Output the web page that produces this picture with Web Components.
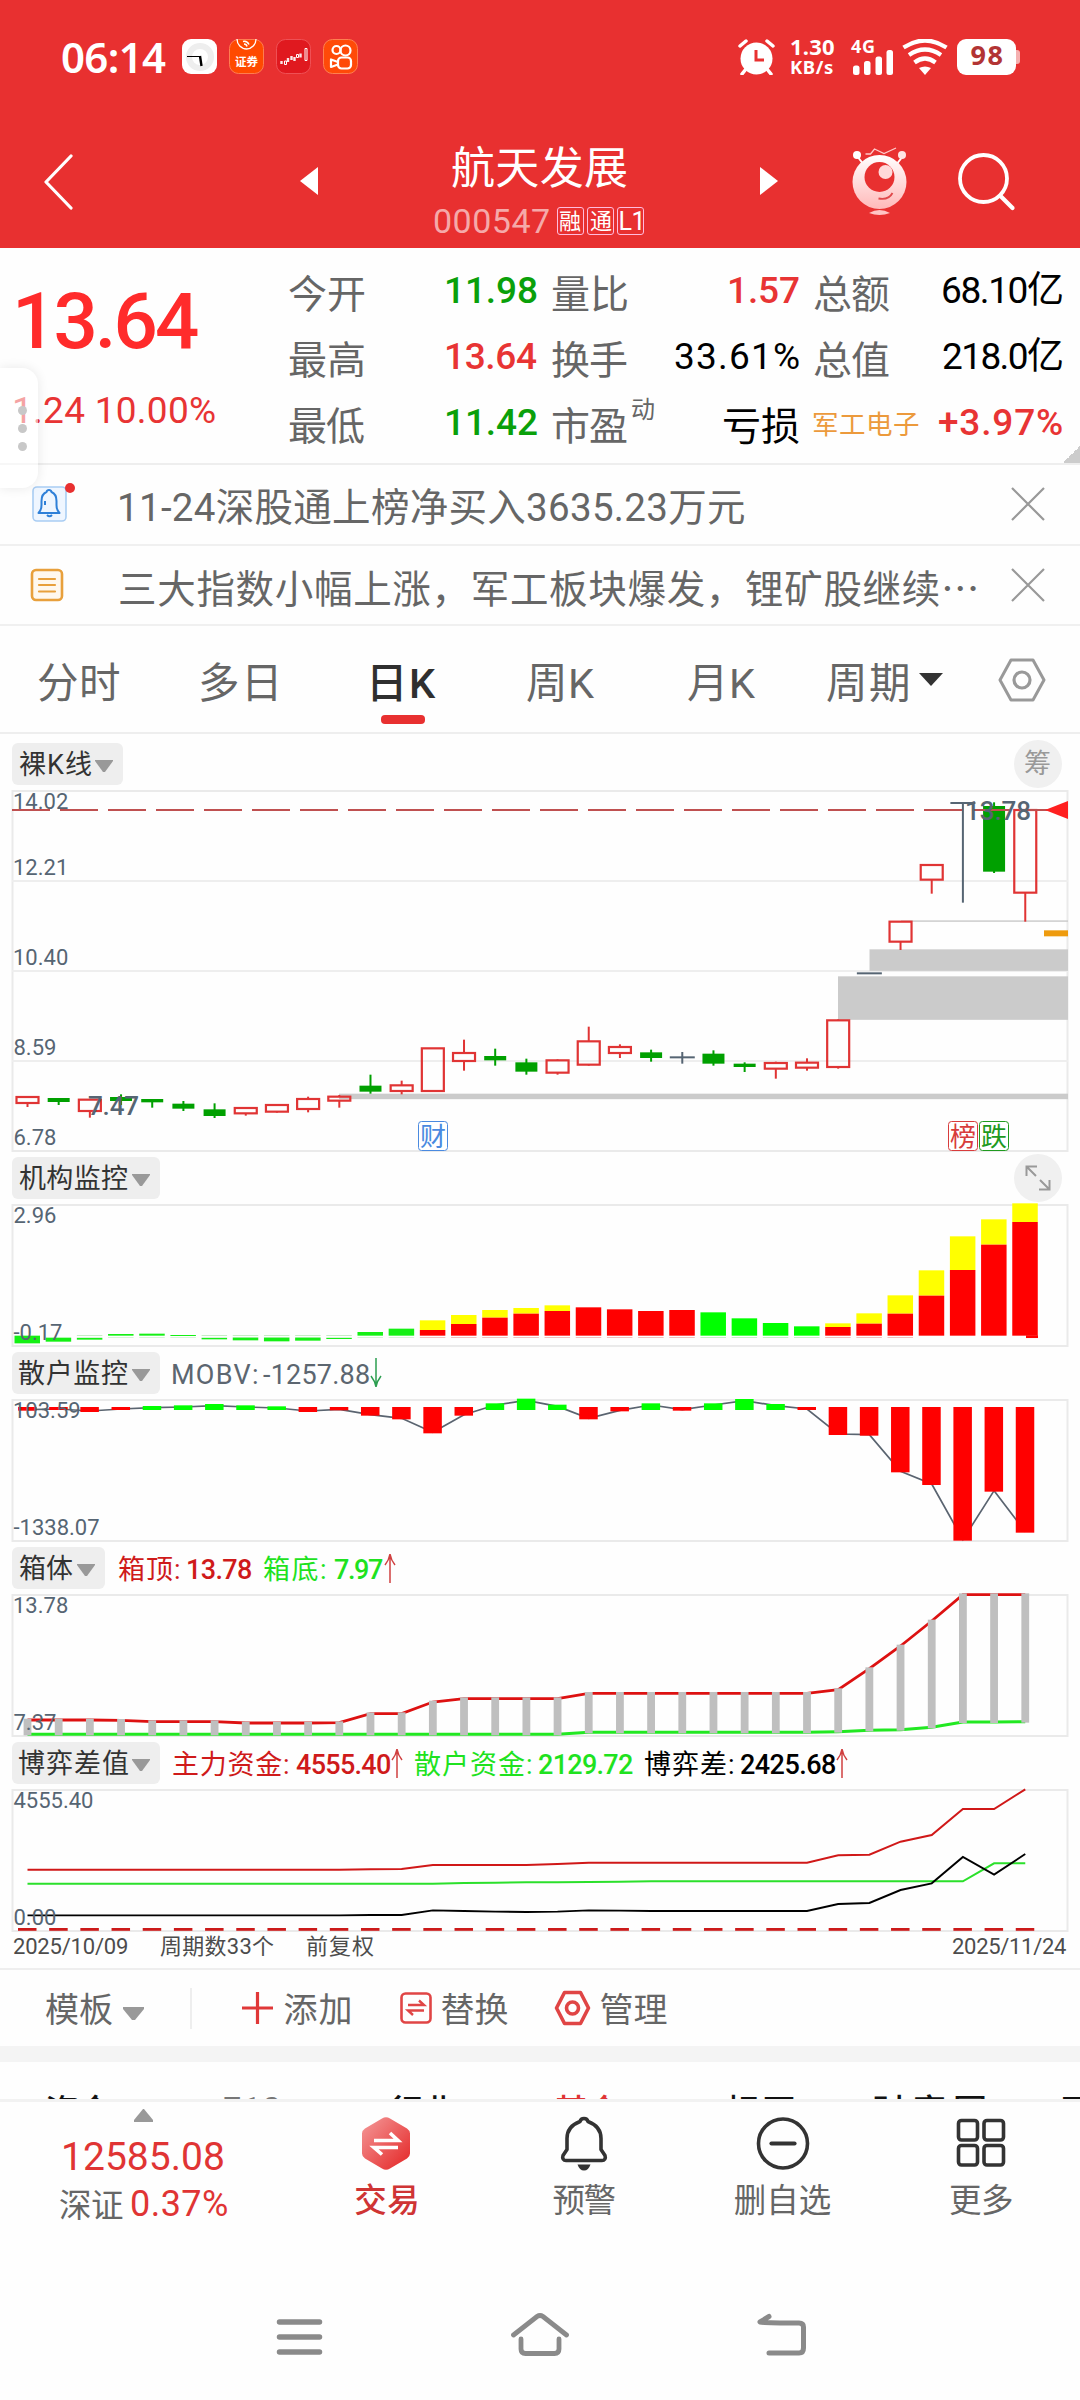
<!DOCTYPE html>
<html lang="zh-CN">
<head>
<meta charset="utf-8">
<title>航天发展 000547</title>
<style>
  html, body {
    margin: 0;
    padding: 0;
  }

  body {
    width: 1080px;
    height: 2400px;
    overflow: hidden;
    background: #fefefe;
    color: #666;
    font-family: Roboto, "Noto Sans CJK SC", sans-serif;
  }
</style>
</head>
<body>
<stock-page></stock-page>

<script>
const measureCtx = document.createElement('canvas').getContext('2d');

// Text that spreads its letters so the ink fills exactly `w` pixels
class FitText extends HTMLElement {
  constructor() {
    super();
    this.attachShadow({ mode: 'open' });
    this.shadowRoot.innerHTML = `
<style>
  :host { display: block; flex: none; white-space: nowrap; line-height: 1.2; }
  span { display: block; white-space: pre; }
</style>
<span><slot></slot></span>`;
  }

  connectedCallback() {
    const w = parseFloat(this.getAttribute('w'));
    const text = this.textContent;
    const cs = getComputedStyle(this);
    measureCtx.font = `${cs.fontWeight} ${cs.fontSize} ${cs.fontFamily}`;
    const m = measureCtx.measureText(text);
    const ink = m.actualBoundingBoxLeft + m.actualBoundingBoxRight;
    const span = this.shadowRoot.querySelector('span');
    this.style.width = w + 'px';
    span.style.marginLeft = m.actualBoundingBoxLeft + 'px';
    if (text.length > 1) {
      span.style.letterSpacing = (w - ink) / (text.length - 1) + 'px';
    }
  }
}
customElements.define('fit-text', FitText);

// Base for elements made of a static shadow template
class UiElement extends HTMLElement {
  constructor() {
    super();
    this.attachShadow({ mode: 'open' });
    const template = document.createElement('template');
    template.innerHTML = this.constructor.html;
    this.shadowRoot.appendChild(template.content.cloneNode(true));
  }
}

// System status bar
class StatusBar extends UiElement {
  static html = `
<style>
  :host { display: flex; align-items: flex-start; height: 113px; box-sizing: border-box; padding: 39px 60px 0 62px; color: #fff; }
  svg { display: block; flex: none; }
  .time { font: 600 42px/36px "Noto Sans", sans-serif; margin-right: 16px; }
  .apps { display: flex; gap: 12px; }
  .right { display: flex; margin-left: auto; height: 36px; }
  .speed { display: flex; flex-direction: column; gap: 5px; margin: -1px 0 0 16px; font-weight: 700; font-family: "Noto Sans", sans-serif; }
  .speed fit-text { line-height: 16px; }
  .signal { margin-left: 17px; width: 43px; display: flex; flex-direction: column; }
  .signal fit-text { font: 700 18px/14px "Noto Sans", sans-serif; height: 11px; }
  .wifi { margin-left: 8px; }
  .battery { display: flex; align-items: center; margin-left: 9px; }
  .level { width: 59px; height: 36px; border-radius: 9px; background: #fff; color: #b23434; display: flex; justify-content: center; font: 700 27px/37px "Noto Sans", sans-serif; }
  .nub { width: 4px; height: 14px; border-radius: 0 3px 3px 0; background: #f5b0b0; }
</style>
<fit-text class="time" w="104">06:14</fit-text>
<div class="apps">
  <svg width="35" height="35" viewBox="0 0 35 35"><rect width="35" height="35" rx="9" fill="#fff"/><circle cx="18" cy="18" r="11" fill="none" stroke="#eee" stroke-width="6"/><path d="M5 17.500H18" stroke="#000" stroke-width="1"/><path d="M18 17l1.500 10" stroke="#000" stroke-width="2.400"/></svg>
  <svg width="35" height="35" viewBox="0 0 35 35"><rect x=".5" y=".5" width="34" height="34" rx="9" fill="#ff4a00" stroke="#ff7d50"/><path d="M8 0a9.500 10 0 0 0 19 0" fill="none" stroke="#fff" stroke-width="1.300"/><path d="M14 2.500q4-1 6 3M15 5q2.500 0 3 2.500" fill="none" stroke="#fff" stroke-width="1.500"/><text x="6" y="27" font-size="11.500" font-weight="700" fill="#fff">证券</text></svg>
  <svg width="35" height="35" viewBox="0 0 35 35"><rect x=".5" y=".5" width="34" height="34" rx="9" fill="#e0191f" stroke="#ef5055"/><path d="M5.500 22v3M12 19v4M15.500 17v4M18.500 18v4M24.500 14.500v4" stroke="#fff" stroke-width="2.400" opacity=".9"/><path d="M8.500 22h2v3.500h-2zM20.500 15.500h2v3h-2zM29 9.500h2v12h-2z" fill="none" stroke="#fff" stroke-width="1"/></svg>
  <svg width="35" height="35" viewBox="0 0 35 35"><rect x=".5" y=".5" width="34" height="34" rx="9" fill="#ff4a08" stroke="#ff8050"/><g fill="none" stroke="#fff" stroke-width="2.200"><circle cx="13.500" cy="11" r="4"/><circle cx="22.500" cy="11.500" r="5"/><rect x="15" y="18.500" width="13" height="11" rx="3.500"/><path d="M15 23l-7-2.500v7.500l7-2.500" stroke-linejoin="round"/></g></svg>
</div>
<div class="right">
  <svg width="37" height="36" viewBox="0 0 37 36"><circle cx="18.500" cy="19.500" r="16" fill="#fff"/><path d="M2 7l6-5M35 7l-6-5" stroke="#fff" stroke-width="3.500" stroke-linecap="round"/><path d="M8 30l-4 5M29 30l4 5" stroke="#fff" stroke-width="3.500" stroke-linecap="round"/><path d="M18 11v10h8" fill="none" stroke="#e83030" stroke-width="3"/></svg>
  <div class="speed">
    <fit-text w="43" style="font-size:22px">1.30</fit-text>
    <fit-text w="42" style="font-size:18.500px">KB/s</fit-text>
  </div>
  <div class="signal">
    <fit-text w="23">4G</fit-text>
    <svg width="43" height="25" viewBox="0 0 43 25"><g fill="#fff"><rect x="2" y="15.500" width="6.500" height="9.500" rx="2.500"/><rect x="13" y="11" width="6.500" height="14" rx="2.500"/><rect x="24.500" y="6.500" width="6.500" height="18.500" rx="2.500"/><rect x="35.500" y="0" width="6.500" height="25" rx="2.500"/></g></svg>
  </div>
  <svg class="wifi" width="46" height="36" viewBox="0 0 46 36"><g fill="none" stroke="#fff" stroke-width="4.200"><path d="M1.500 8.500Q23-5.500 44.500 8.500"/><path d="M7 16Q23 5 39 16"/><path d="M12.500 23.500Q23 15.500 33.500 23.500"/></g><path d="M17 29q6-3 12 0l-6 7z" fill="#fff"/></svg>
  <div class="battery"><div class="level"><fit-text w="32">98</fit-text></div><div class="nub"></div></div>
</div>`;
}
customElements.define('status-bar', StatusBar);

// Title bar with the stock name
class TitleBar extends UiElement {
  static html = `
<style>
  :host { display: flex; height: 135px; color: #fff; }
  svg { display: block; flex: none; }
  .name { display: flex; flex-direction: column; align-items: center; width: 210px; margin: 0 116px 0 116px; }
  .title { font-size: 44px; line-height: 50px; margin: 31px 0 0 1px; }
  .code { display: flex; gap: 3px; margin-top: 13px; }
  .code > fit-text { font-size: 34px; line-height: 28px; color: #f5a9a9; margin-right: 5px; }
  .tag { width: 25px; height: 26px; border: 1px solid #fbd; border-radius: 3px; display: flex; justify-content: center; font-size: 22px; }
  .tag fit-text { line-height: 28px; }
</style>
<svg style="margin:41px 0 0 42px" width="32" height="56" viewBox="0 0 32 56"><path d="M29 2L4 28l25 26" fill="none" stroke="#fff" stroke-width="3.200" stroke-linecap="round" stroke-linejoin="round"/></svg>
<svg style="margin:53px 0 0 226px" width="18" height="30" viewBox="0 0 18 30"><path d="M18 1v28L0 15z" fill="#fff"/></svg>
<div class="name">
  <fit-text class="title" w="175">航天发展</fit-text>
  <div class="code">
    <fit-text w="115">000547</fit-text>
    <div class="tag"><fit-text w="21">融</fit-text></div>
    <div class="tag"><fit-text w="21">通</fit-text></div>
    <div class="tag"><fit-text w="20" style="font-size:25px;line-height:27px">L1</fit-text></div>
  </div>
</div>
<svg style="margin:53px 0 0 0" width="18" height="30" viewBox="0 0 18 30"><path d="M0 1v28l18-14z" fill="#fff"/></svg>
<svg style="margin:34px 0 0 74px" width="56" height="70" viewBox="0 0 56 70">
  <defs><linearGradient id="body" x1="0" y1="0" x2="0" y2="1"><stop offset="0" stop-color="#fff"/><stop offset="1" stop-color="#ffb9b9"/></linearGradient></defs>
  <path d="M5 9l7 9M51 9l-7 9" stroke="#fff" stroke-width="2"/>
  <circle cx="5" cy="8" r="4" fill="#fff"/><circle cx="50" cy="8" r="4" fill="#ffe4e4"/>
  <path d="M13.500 7h5l4-5 9.500 4.500L44 1" fill="none" stroke="#ffc9c9" stroke-width="1.300"/>
  <circle cx="27.500" cy="35" r="27" fill="url(#body)"/>
  <circle cx="27.500" cy="30" r="15" fill="#e83030"/>
  <circle cx="33.500" cy="25" r="7" fill="#ffd9d9"/>
  <path d="M26.500 51.500q10 2 14-5.500" fill="none" stroke="#e0484a" stroke-width="1.800"/>
  <path d="M17 66q10.500-6 21 0-10.500 4-21 0z" fill="#ffc4c4"/>
</svg>
<svg style="margin:39px 0 0 49px" width="60" height="60" viewBox="0 0 60 60"><circle cx="26.500" cy="26.500" r="23.500" fill="none" stroke="#fff" stroke-width="3.800"/><path d="M43.500 44l12 12" stroke="#fff" stroke-width="4.200" stroke-linecap="round"/></svg>`;
}
customElements.define('title-bar', TitleBar);

// Price summary: big price on the left, nine figures on the right
class QuoteSummary extends UiElement {
  static html = `
<style>
  :host { display: flex; position: relative; box-sizing: border-box; height: 217px; border-bottom: 2px solid #eee; }
  .price { width: 271px; padding-left: 18px; color: #ff2b2b; }
  .price .last { font-size: 78px; font-weight: 500; line-height: 90px; margin-top: 29px; }
  .price .diff { font-size: 37px; line-height: 44px; margin: 22px 0 0 -3px; color: #e83434; }
  .figures { display: grid; grid-template-columns: 248px 247px 248px; grid-template-rows: repeat(3, 66px); column-gap: 15px; padding-top: 10px; }
  .cell { display: flex; justify-content: space-between; align-items: center; font-size: 37px; color: #000; font-weight: 500; }
  .cell .label { font-size: 39px; color: #666; font-weight: 400; padding-top: 8px; }
  .cell .mark { font-size: 24px; color: #666; font-weight: 400; margin: 0 auto 26px 5px; }
  .cell .sector { font-size: 26.500px; color: #ec9a3c; font-weight: 400; padding-top: 4px; }
  .cell .plain { font-weight: 400; }
  .up { color: #e83434; }
  .down { color: #0aa00a; }
  .corner { position: absolute; right: 0; bottom: 0; width: 17px; height: 17px; background: linear-gradient(135deg, transparent 50%, #ccc 50%); }
</style>
<div class="price">
  <fit-text class="last" w="180">13.64</fit-text>
  <fit-text class="diff" w="200">1.24 10.00%</fit-text>
</div>
<div class="figures">
  <div class="cell"><fit-text class="label" w="75">今开</fit-text><fit-text class="down" w="90">11.98</fit-text></div>
  <div class="cell"><fit-text class="label" w="75">量比</fit-text><fit-text class="up" w="69">1.57</fit-text></div>
  <div class="cell"><fit-text class="label" w="75">总额</fit-text><fit-text class="plain" w="119">68.10亿</fit-text></div>
  <div class="cell"><fit-text class="label" w="75">最高</fit-text><fit-text class="up" w="90">13.64</fit-text></div>
  <div class="cell"><fit-text class="label" w="75">换手</fit-text><fit-text class="plain" w="124">33.61%</fit-text></div>
  <div class="cell"><fit-text class="label" w="75">总值</fit-text><fit-text class="plain" w="119">218.0亿</fit-text></div>
  <div class="cell"><fit-text class="label" w="75">最低</fit-text><fit-text class="down" w="90">11.42</fit-text></div>
  <div class="cell"><fit-text class="label" w="75">市盈</fit-text><fit-text class="mark" w="24">动</fit-text><fit-text class="plain" w="75" style="font-size:39px;padding-top:8px">亏损</fit-text></div>
  <div class="cell"><fit-text class="sector" w="105">军工电子</fit-text><fit-text class="up" w="123">+3.97%</fit-text></div>
</div>
<div class="corner"></div>`;
}
customElements.define('quote-summary', QuoteSummary);

// Side handle that floats over the page
class SideHandle extends UiElement {
  static html = `
<style>
  :host { position: absolute; left: 0; top: 368px; width: 38px; height: 120px; box-sizing: border-box; border-radius: 0 16px 16px 0; background: rgba(255,255,255,.55); box-shadow: 0 0 12px rgba(0,0,0,.09); display: flex; flex-direction: column; align-items: center; gap: 9px; padding: 38px 0 0 6px; }
  i { width: 9px; height: 9px; border-radius: 50%; background: #c8c8c8; }
</style>
<i></i><i></i><i></i>`;
}
customElements.define('side-handle', SideHandle);

// One line of news with an icon and a close cross
class NewsRow extends UiElement {
  static html = `
<style>
  :host { display: flex; align-items: center; box-sizing: border-box; height: 80.500px; padding: 0 34px 0 30px; border-bottom: 2px solid #f0f0f0; font-size: 38.500px; }
  .icon { width: 90px; flex: none; }
  .text { padding-top: 8px; }
  .close { margin-left: auto; display: block; }
</style>
<div class="icon"><slot name="icon"></slot></div>
<div class="text"><slot></slot></div>
<svg class="close" width="36" height="36" viewBox="0 0 36 36"><path d="M2 2l32 32M34 2L2 34" stroke="#999" stroke-width="2.200"/></svg>`;
}
customElements.define('news-row', NewsRow);

// Period tabs
class PeriodTabs extends UiElement {
  static html = `
<style>
  :host { display: flex; box-sizing: border-box; height: 108px; padding: 0 34px 0 38px; border-bottom: 2px solid #eee; font-size: 41.500px; }
  .tab { display: flex; flex-direction: column; align-items: center; }
  .tab fit-text { line-height: 56px; margin-top: 30px; }
  .tab.on { color: #2f2f2f; font-weight: 500; }
  .tab.on::after { content: ""; width: 44px; height: 9px; border-radius: 4px; background: #e83030; margin: 3px 2px 0 0; }
  svg { display: block; }
</style>
<div class="tab"><fit-text w="81">分时</fit-text></div>
<div class="tab" style="margin-left:82px"><fit-text w="75">多日</fit-text></div>
<div class="tab on" style="margin-left:96px"><fit-text w="64">日K</fit-text></div>
<div class="tab" style="margin-left:91px"><fit-text w="68">周K</fit-text></div>
<div class="tab" style="margin-left:93px"><fit-text w="68">月K</fit-text></div>
<div class="tab" style="margin-left:71px"><fit-text w="81">周期</fit-text></div>
<svg style="margin:47px 0 0 11px" width="24" height="14" viewBox="0 0 24 14"><path d="M0 0h24L12 13z" fill="#333"/></svg>
<svg style="margin:31px 0 0 auto" width="48" height="46" viewBox="0 0 48 46"><path d="M13 3h22l11 20-11 20H13L2 23z" fill="none" stroke="#999" stroke-width="3" stroke-linejoin="round"/><circle cx="24" cy="23" r="8" fill="none" stroke="#999" stroke-width="3.200"/></svg>`;
}
customElements.define('period-tabs', PeriodTabs);

// Chart block: selector chip, legend slot, round tool slot, then the plot
class ChartPanel extends UiElement {
  static html = `
<style>
  :host { display: block; padding: 0 12px; }
  header { display: flex; align-items: center; height: 42px; padding: 6px 0; font-size: 27px; }
  .chip { display: flex; align-items: center; height: 42px; padding: 0 10px 0 7px; border-radius: 6px; background: #eee; color: #333; }
  .chip svg { flex: none; margin: 3px 0 0 4px; }
  .chip .name { padding-top: 3px; }
  .legend { display: flex; align-items: center; margin-left: 13px; padding-top: 4px; font-size: 27px; }
  .tool { margin-left: auto; padding-right: 6px; height: 48px; }
</style>
<header>
  <div class="chip"><span class="name"><slot name="name"></slot></span><svg width="18" height="12" viewBox="0 0 18 12"><path d="M0 0h18v1L10 12H8L0 1z" fill="#999"/></svg></div>
  <div class="legend"><slot name="legend"></slot></div>
  <div class="tool"><slot name="tool"></slot></div>
</header>
<slot></slot>`;
}
customElements.define('chart-panel', ChartPanel);

class RoundTool extends UiElement {
  static html = `
<style>
  :host { display: flex; align-items: center; justify-content: center; width: 48px; height: 48px; border-radius: 50%; background: #f0f0f0; color: #999; font-size: 27px; }
</style>
<slot></slot>`;
}
customElements.define('round-tool', RoundTool);

// Up or down arrow after a legend value
class TrendArrow extends HTMLElement {
  constructor() {
    super();
    this.attachShadow({ mode: 'open' });
    const down = this.hasAttribute('down');
    this.shadowRoot.innerHTML = `
<style>
  :host { display: block; height: 30px; margin: -4px 0 0 1px; }
  svg { display: block; ${down ? 'transform: scaleY(-1);' : ''} }
</style>
<svg width="12" height="30" viewBox="0 0 12 30"><path d="M6 30V2M1 12q4-5 5-11 1 6 5 11" fill="none" stroke="${down ? '#2c9e50' : '#d04040'}" stroke-width="1.500"/></svg>`;
  }
}
customElements.define('trend-arrow', TrendArrow);

const STEP = 31.18;
const cx = i => 27.5 + i * STEP;
const rect = (x, y, w, h, fill) => `<rect x="${x}" y="${y}" width="${w}" height="${h}" fill="${fill}"/>`;
const line = (points, color, width) =>
  `<polyline points="${points.map((y, i) => cx(i) + ',' + y).join(' ')}" fill="none" stroke="${color}" stroke-width="${width}"/>`;
const fill = (n, v) => Array(n).fill(v);

// Base plot. Values are kept in thirds of a pixel from `origin`.
class BasePlot extends HTMLElement {
  constructor() {
    super();
    this.attachShadow({ mode: 'open' });
  }

  connectedCallback() {
    const { top, height } = this;
    this.shadowRoot.innerHTML = `
<style>
  :host { display: block; }
  svg { display: block; overflow: visible; }
  text { font-family: Roboto, "Noto Sans CJK SC", sans-serif; font-size: 22px; fill: #566573; }
</style>
<svg width="1056" height="${height}" viewBox="12 ${top} 1056 ${height}">
<rect x="12.500" y="${top}" width="1055" height="${height}" fill="none" stroke="#eaeaea" stroke-width="2"/>
${this.draw(v => this.origin + v / 3)}
${this.labels.map(([text, y]) => `<text x="${text[0] === '1' ? 13 : 13.5}" y="${y}">${text}</text>`).join('')}
</svg>`;
  }
}

const CANDLES = [
  ['r', 1101, 1119, 1101, 1131], ['g', 1104, 1116, 1104, 1125], ['r', 1109, 1143, 1109, 1163],
  ['g', 1101, 1113, 1093, 1125], ['g', 1107, 1117, 1107, 1133], ['g', 1121, 1136, 1113, 1143],
  ['g', 1138, 1158, 1120, 1164], ['r', 1134, 1150, 1131, 1157], ['r', 1125, 1145, 1122, 1148],
  ['r', 1107, 1137, 1100, 1147], ['r', 1100, 1112, 1095, 1133], ['g', 1067, 1085, 1034, 1091],
  ['r', 1066, 1083, 1052, 1093], ['r', 955, 1083, 955, 1086], ['r', 969, 993, 929, 1022],
  ['g', 978, 991, 956, 1007], ['g', 997, 1025, 986, 1034], ['r', 991, 1028, 988, 1034],
  ['r', 934, 1004, 890, 1007], ['r', 951, 969, 943, 984], ['g', 967, 984, 959, 995],
  ['n', 982, 982, 966, 1001], ['g', 971, 1001, 961, 1007], ['g', 1001, 1011, 997, 1026],
  ['r', 999, 1016, 995, 1046], ['r', 998, 1013, 985, 1022], ['r', 871, 1011, 868, 1016],
  ['n', 730, 730, 730, 730], ['r', 575, 635, 575, 660], ['r', 405, 449, 405, 491],
  ['n', 219, 219, 219, 518], ['g', 228, 425, 217, 429], ['r', 240, 488, 240, 575]
];

class CandlePlot extends BasePlot {
  top = 791;
  height = 360;
  origin = 730;
  labels = [['14.02', 809], ['12.21', 875], ['10.40', 965], ['8.59', 1055], ['6.78', 1145]];

  badge(x, text, color) {
    return `<rect x="${x + 0.5}" y="1121.500" width="29" height="29" rx="3" fill="#fff" stroke="${color}"/>
<text x="${x + 2}" y="1145.500" style="font-size:26px;fill:${color}">${text}</text>`;
  }

  draw(y) {
    let out = [881, 971, 1061].map(g => rect(12, g - 1, 1056, 2, '#eee')).join('');
    // price gaps
    out += rect(339, y(1091), 729, 5.5, '#cbcbcb');
    out += rect(838, y(739), 230, 43.5, '#cbcbcb');
    out += rect(869.500, y(658), 198.500, 21.5, '#cbcbcb');
    out += rect(901, y(571), 167, 1.5, '#ccc');
    out += rect(1044, y(601), 24, 6, '#ee9b0e');
    CANDLES.forEach(([kind, top, bottom, high, low], i) => {
      const x = cx(i);
      const color = { r: '#e03434', g: '#00a000', n: '#566573' }[kind];
      if (kind === 'g') {
        out += rect(x - 1, y(high), 2, (low - high) / 3, color) + rect(x - 11, y(top), 22, (bottom - top) / 3, color);
      } else if (kind === 'n') {
        out += rect(x - 1, y(high), 2, (low - high) / 3, color) + rect(x - 12.500, y(top) - 1, 25, 2, color);
      } else {
        out += rect(x - 1, y(high), 2, (top - high) / 3, color) + rect(x - 1, y(bottom), 2, (low - bottom) / 3, color);
        out += `<rect x="${x - 11}" y="${y(top)}" width="22" height="${(bottom - top) / 3}" fill="none" stroke="${color}" stroke-width="2.200"/>`;
      }
    });
    out += `<path d="M12 810H1050" stroke="#bf5050" stroke-width="2" stroke-dasharray="38 10"/>`;
    out += `<path d="M1068 801v18l-23-9z" fill="#ff2020"/>`;
    out += `<text x="88" y="1115" style="font-size:26px;font-weight:500" textLength="51">7.47</text>`;
    out += `<text x="965" y="820" style="font-size:26px;font-weight:500" textLength="66">13.78</text>`;
    out += this.badge(418, '财', '#4a8ae0') + this.badge(948, '榜', '#d83c3c') + this.badge(979, '跌', '#1f9a1f');
    return out;
  }
}
customElements.define('candle-plot', CandlePlot);

class InstitutionPlot extends BasePlot {
  top = 1205;
  height = 141;
  origin = 1150;
  labels = [['2.96', 1223], ['-0.17', 1340]];

  draw(y) {
    const G = '#00ff00';
    const low = [[557, 580], [563, 575], [564, 569], [552, 557], [551, 557], [555, 558], [564, 568], [563, 571], [563, 574], [563, 572], [564, 567], [546, 557], [536, 557]];
    // [yellow top, bar top, colour]
    const high = [[511, 540], [495, 522], [480, 503], [474, 491], [466, 483], [0, 472], [0, 478], [0, 483], [0, 480],
      [0, 487, G], [0, 505, G], [0, 519, G], [0, 529, G],
      [520, 531], [490, 521], [436, 491], [361, 437], [259, 360], [208, 284], [160, 216]];
    let out = '';
    low.forEach(([a, b], i) => {
      if (i > 1) out += rect(cx(i) - 13, y(561), 25.5, 0.6, '#bfeabf');
      if (a > 560 && i > 1) out += rect(cx(i) - 13, y(555), 25.5, 0.6, '#9fe09f');
      out += rect(cx(i) - 13, y(a), 25.5, (b - a) / 3, '#14f014');
    });
    high.forEach(([yellow, top, color = '#ff0000'], n) => {
      const x = cx(n + 13) - 13;
      if (yellow) out += rect(x, y(yellow), 25.5, (top - yellow) / 3, '#ffff00');
      out += rect(x, y(top), 25.5, (557 - top) / 3, color);
      if (n < 16) out += rect(x, y(561), 25.5, 0.8, color === G ? '#b5f0b5' : '#f0b0b0');
    });
    out += rect(1026, y(556), 12, 2.7, '#ff0000');
    return out;
  }
}
customElements.define('institution-plot', InstitutionPlot);

class RetailPlot extends BasePlot {
  top = 1400;
  height = 141;
  origin = 1150;
  labels = [['103.59', 1418], ['-1338.07', 1535]];

  draw(y) {
    const ends = [782, 780, 786, 780, 768, 766, 762, 766, 769, 786, 781, 797, 808, 850, 797, 760, 746, 764, 808, 784, 760,
      782, 760, 747, 762, 780, 855, 857, 967, 1005, 1172, 1025, 1148];
    let out = line(ends.map(v => y(v > 775 ? v - 3 : v + 5)), '#5a6470', 1.7);
    ends.forEach((v, i) => {
      const x = cx(i) - 9.5;
      out += v > 775 ? rect(x, y(771), 18.5, (v - 771) / 3, '#ff0000') : rect(x, y(v), 18.5, (780 - v) / 3, '#00ff00');
    });
    return out;
  }
}
customElements.define('retail-plot', RetailPlot);

class BoxPlot extends BasePlot {
  top = 1595;
  height = 141;
  origin = 1540;
  labels = [['13.78', 1613], ['7.37', 1730]];

  draw(y) {
    const upper = [540, 540, 540, 541, 545, 545, 545, 549, 549, 549, 548, 521, 521, 486, 476, 476, 476, 476,
      ...fill(8, 460), 449, 386, 318, 243, 164, 164, 164];
    const lower = [...fill(18, 583), ...fill(8, 577), 575, 571, 569, 562, 546, 546, 545];
    let out = line(upper.map(y), '#dd1111', 2.8) + line(lower.map(y), '#22e822', 3);
    upper.forEach((v, i) => {
      out += rect(cx(i) - 3.9, y(v - 4), 7.8, (lower[i] - v + 7) / 3, '#bfbfbf');
    });
    return out;
  }
}
customElements.define('box-plot', BoxPlot);

class GamePlot extends BasePlot {
  top = 1790;
  height = 141;
  origin = 1540;
  labels = [['4555.40', 1808], ['0.00', 1925]];

  draw(y) {
    const main = [...fill(11, 989), 988, 987, 975, 975, 975, 975, 972, ...fill(8, 968), 946, 944, 905, 885, 807, 807, 748];
    const retail = [...fill(14, 1031), 1029, 1028, 1027, 1027, 1026, 1025, ...fill(11, 1024), 970, 970];
    const diff = [...fill(11, 1126), 1125, 1125, 1111, 1113, 1115, 1116, 1115, 1111, 1112, ...fill(6, 1113), 1092, 1089, 1050, 1030, 951, 1004, 942];
    let out = line(retail.map(y), '#2be02b', 2) + line(main.map(y), '#d01818', 2) + line(diff.map(y), '#000', 1.9);
    diff.forEach((v, i) => {
      out += rect(cx(i) - 9.5, y(1164), 18.5, 2.8, '#cc1a1a');
    });
    return out;
  }
}
customElements.define('game-plot', GamePlot);

// Dates under the last plot
class DateRow extends UiElement {
  static html = `
<style>
  :host { display: flex; align-items: center; box-sizing: border-box; height: 39px; padding: 0 14px 0 14px; border-bottom: 2px solid #eee; font-size: 22px; color: #4c4c4c; }
  fit-text { padding-bottom: 4px; }
</style>
<fit-text w="113">2025/10/09</fit-text>
<fit-text w="114" style="margin-left:33px">周期数33个</fit-text>
<fit-text w="67" style="margin-left:33px">前复权</fit-text>
<fit-text w="113" style="margin-left:auto">2025/11/24</fit-text>`;
}
customElements.define('date-row', DateRow);

// Template / add / replace / manage
class ToolRow extends UiElement {
  static html = `
<style>
  :host { display: flex; align-items: center; box-sizing: border-box; height: 76px; padding-left: 46px; font-size: 34px; }
  fit-text { padding-top: 5px; }
  .rule { width: 1.500px; height: 41px; background: #eee; margin-left: 46px; }
  svg { display: block; }
</style>
<fit-text w="66">模板</fit-text>
<svg style="margin:10px 0 0 11px" width="21" height="13" viewBox="0 0 21 13"><path d="M0 0h21v2L12 13H9L0 2z" fill="#999"/></svg>
<div class="rule"></div>
<svg style="margin-left:50px" width="31" height="32" viewBox="0 0 31 32"><path d="M0 16h31M15.500 0v32" stroke="#e03838" stroke-width="3.200"/></svg>
<fit-text w="66" style="margin-left:12px">添加</fit-text>
<svg style="margin-left:49px" width="32" height="32" viewBox="0 0 32 32"><rect x="1.500" y="1.500" width="29" height="29" rx="4" fill="none" stroke="#e04545" stroke-width="2.600"/><path d="M8 13h16l-5-4.500M24 18.500H8l5 4.500" fill="none" stroke="#e04545" stroke-width="2.400"/></svg>
<fit-text w="66" style="margin-left:10px">替换</fit-text>
<svg style="margin-left:46px" width="37" height="36" viewBox="0 0 37 36"><path d="M10.500 2.500h16l8 15.500-8 15.500h-16L2.500 18z" fill="none" stroke="#e04545" stroke-width="3.600" stroke-linejoin="round"/><circle cx="18.500" cy="18" r="6" fill="none" stroke="#e04545" stroke-width="3.600"/></svg>
<fit-text w="66" style="margin-left:10px">管理</fit-text>`;
}
customElements.define('tool-row', ToolRow);

// Section tabs, scrolled mostly under the bottom bar
class SectionTabs extends UiElement {
  static html = `
<style>
  :host { display: flex; box-sizing: border-box; height: 53px; border-top: 16px solid #f4f4f4; padding: 28px 0 0 46px; overflow: hidden; color: #111; font-size: 34px; font-weight: 500; }
  fit-text { line-height: 44px; }
</style>
<fit-text w="66">资金</fit-text>
<fit-text w="56" style="margin:-3px 0 0 112px;color:#777">F10</fit-text>
<fit-text w="66" style="margin-left:109px">行业</fit-text>
<fit-text w="66" style="margin-left:100px;color:#e03434">基金</fit-text>
<fit-text w="69" style="margin-left:104px">相同</fit-text>
<fit-text w="112" style="margin-left:79px">财富圈</fit-text>
<fit-text w="66" style="margin-left:78px">两融</fit-text>`;
}
customElements.define('section-tabs', SectionTabs);

// Bottom actions
class ActionBar extends UiElement {
  static html = `
<style>
  :host { display: flex; box-sizing: border-box; height: 179px; border-top: 3px solid #f2f2f2; font-size: 32.500px; }
  .index { width: 287px; display: flex; flex-direction: column; align-items: center; color: #e03434; }
  .index .value { font-size: 39px; line-height: 46px; margin-top: 12px; }
  .index .row { display: flex; align-items: center; gap: 9px; margin-top: 3px; }
  .action { width: 198.250px; display: flex; flex-direction: column; align-items: center; padding-top: 14px; }
  .action fit-text { line-height: 44px; margin-top: 8px; }
  svg { display: block; }
</style>
<div class="index">
  <svg style="margin-top:7px" width="19" height="13" viewBox="0 0 19 13"><path d="M9 0h1l9 11v2H0v-2z" fill="#999"/></svg>
  <fit-text class="value" w="159">12585.08</fit-text>
  <div class="row"><fit-text w="63" style="color:#666;padding-top:3px">深证</fit-text><fit-text w="95" style="font-size:36px">0.37%</fit-text></div>
</div>
<div class="action" style="color:#cf3434;font-weight:500">
  <svg width="50" height="55" viewBox="0 0 50 55"><defs><linearGradient id="hex" x1="0" y1="0" x2="1" y2="1"><stop offset="0" stop-color="#f49a9a"/><stop offset="1" stop-color="#e42424"/></linearGradient></defs><path d="M21 2.500q4-2.500 8 0l17 10q3 2 3 5v20q0 3-3 5l-17 10q-4 2.500-8 0l-17-10q-3-2-3-5v-20q0-3 3-5z" fill="url(#hex)"/><path d="M13 24.500h24l-8-7.500M37 31.500H13l8 7" fill="none" stroke="#fff" stroke-width="3.600"/></svg>
  <fit-text w="62">交易</fit-text>
</div>
<div class="action">
  <svg width="48" height="55" viewBox="0 0 48 55"><path d="M24 2.500c2 0 3.500 1 4 3 8 3 13 9 13 17v11l4 6c1 3-.500 5-3 5H6c-2.500 0-4-2-3-5l4-6v-11c0-8 5-14 13-17 .500-2 2-3 4-3z" fill="none" stroke="#333" stroke-width="3.600" stroke-linejoin="round"/><path d="M17.500 48.500h13q-2 6-6.500 6t-6.500-6z" fill="#333"/></svg>
  <fit-text w="62">预警</fit-text>
</div>
<div class="action">
  <svg width="54" height="55" viewBox="0 0 54 55"><circle cx="27" cy="27.500" r="24.500" fill="none" stroke="#333" stroke-width="3.600"/><path d="M15.500 27.500h23" stroke="#333" stroke-width="4.200" stroke-linecap="round"/></svg>
  <fit-text w="96">删自选</fit-text>
</div>
<div class="action">
  <svg width="50" height="55" viewBox="0 0 50 55"><g fill="none" stroke="#333" stroke-width="3.600"><rect x="2.500" y="4.500" width="19" height="19.500" rx="3"/><rect x="28" y="4.500" width="19.500" height="19.500" rx="3"/><rect x="2.500" y="29.500" width="19" height="19.500" rx="3"/><rect x="28" y="29.500" width="19.500" height="19.500" rx="3"/></g></svg>
  <fit-text w="62">更多</fit-text>
</div>`;
}
customElements.define('action-bar', ActionBar);

// System navigation keys
class SystemNav extends UiElement {
  static html = `
<style>
  :host { display: flex; justify-content: center; align-items: flex-start; height: 87px; padding: 35px 0 0 2px; gap: 187px; }
  svg { display: block; fill: none; stroke: #8a8a8a; stroke-linecap: round; }
</style>
<svg width="47" height="45" viewBox="0 0 47 45"><path d="M3.500 9h40M3.500 24h40M3.500 39h40" stroke-width="5.500"/></svg>
<svg width="60" height="45" viewBox="0 0 60 45"><path d="M3.500 22L27 3.500q3-2 6 0L56.500 22M11 26v10q0 4.500 4.500 4.500h29q4.500 0 4.500-4.500V26" stroke-width="4.800"/></svg>
<svg width="50" height="45" viewBox="0 0 50 45"><path d="M12 3.500L3 9q5 1 39 1 4.500 0 4.500 4v21q0 5-4.500 5H12" stroke-width="5" stroke-linejoin="round"/></svg>`;
}
customElements.define('system-nav', SystemNav);

class StockPage extends UiElement {
  static html = `
<style>
  :host { display: flex; flex-direction: column; position: relative; width: 1080px; height: 2400px; overflow: hidden; }
  :host > * { flex: none; }
  .top { background: #e83030; height: 248px; }
  .first { margin-top: 3px; }
  .legend { display: flex; align-items: center; }
  .val { font-weight: 500; margin-left: 9px; }
  .red { color: #cf1a1a; }
  .green { color: #1fe21f; }
  .black { color: #000; }
  .gap { margin-left: 12px; }
  svg { display: block; }
</style>
<div class="top">
  <status-bar></status-bar>
  <title-bar></title-bar>
</div>
<quote-summary></quote-summary>
<news-row>
  <svg slot="icon" width="48" height="46" viewBox="0 0 48 46"><rect x="3" y="6" width="33" height="34" rx="4" fill="#eff6ff" stroke="#a9cdf3" stroke-width="1.600"/><path d="M8.500 32q3-3 3-8v-4q0-7 5-9 .500-2 2.500-2t2.500 2q5 2 5 9v4q0 5 3 8z" fill="none" stroke="#2f80d8" stroke-width="2" stroke-linejoin="round"/><path d="M17 34q2.500 2.500 5 0M15 20v4" fill="none" stroke="#2f80d8" stroke-width="2"/><circle cx="40" cy="7" r="5" fill="#e83030"/></svg>
  <fit-text w="624">11-24深股通上榜净买入3635.23万元</fit-text>
</news-row>
<news-row>
  <svg slot="icon" width="34" height="34" viewBox="0 0 34 34"><rect x="2" y="2" width="30" height="30" rx="4" fill="#fff8ee" stroke="#e8a03c" stroke-width="2.600"/><path d="M9 11h16M9 17h16M9 23.500h16" stroke="#e8a03c" stroke-width="2.200" stroke-linecap="round"/></svg>
  <fit-text w="856" style="font-family:'Noto Sans CJK SC',sans-serif;line-height:46px;margin-top:-6px">三大指数小幅上涨，军工板块爆发，锂矿股继续…</fit-text>
</news-row>
<period-tabs></period-tabs>
<chart-panel class="first">
  <fit-text slot="name" w="72">裸K线</fit-text>
  <round-tool slot="tool"><fit-text w="26">筹</fit-text></round-tool>
  <candle-plot></candle-plot>
</chart-panel>
<chart-panel>
  <fit-text slot="name" w="109">机构监控</fit-text>
  <round-tool slot="tool"><svg width="26" height="26" viewBox="0 0 26 26"><path d="M1.500 11V1.500H12M2 2l9 9M24.500 15v9.500H14M24 24l-9-9" fill="none" stroke="#999" stroke-width="2"/></svg></round-tool>
  <institution-plot></institution-plot>
</chart-panel>
<chart-panel>
  <fit-text slot="name" w="109">散户监控</fit-text>
  <div slot="legend" class="legend" style="color:#5c6670"><fit-text w="84">MOBV:</fit-text><fit-text w="106" style="margin-left:6px">-1257.88</fit-text><trend-arrow down></trend-arrow></div>
  <retail-plot></retail-plot>
</chart-panel>
<chart-panel>
  <fit-text slot="name" w="54">箱体</fit-text>
  <div slot="legend" class="legend"><fit-text class="red" w="61">箱顶:</fit-text><fit-text class="val red" w="63">13.78</fit-text><fit-text class="green gap" w="62">箱底:</fit-text><fit-text class="val green" w="49">7.97</fit-text><trend-arrow></trend-arrow></div>
  <box-plot></box-plot>
</chart-panel>
<chart-panel>
  <fit-text slot="name" w="109">博弈差值</fit-text>
  <div slot="legend" class="legend"><fit-text class="red" w="115">主力资金:</fit-text><fit-text class="val red" w="94" style="margin-left:8px">4555.40</fit-text><trend-arrow></trend-arrow><fit-text class="green gap" w="116">散户资金:</fit-text><fit-text class="val green" w="94" style="margin-left:8px">2129.72</fit-text><fit-text class="black gap" w="88">博弈差:</fit-text><fit-text class="val black" w="94" style="margin-left:8px">2425.68</fit-text><trend-arrow></trend-arrow></div>
  <game-plot></game-plot>
</chart-panel>
<date-row></date-row>
<tool-row></tool-row>
<section-tabs></section-tabs>
<action-bar></action-bar>
<system-nav></system-nav>
<side-handle></side-handle>`;
}
customElements.define('stock-page', StockPage);
</script>
</body>
</html>
